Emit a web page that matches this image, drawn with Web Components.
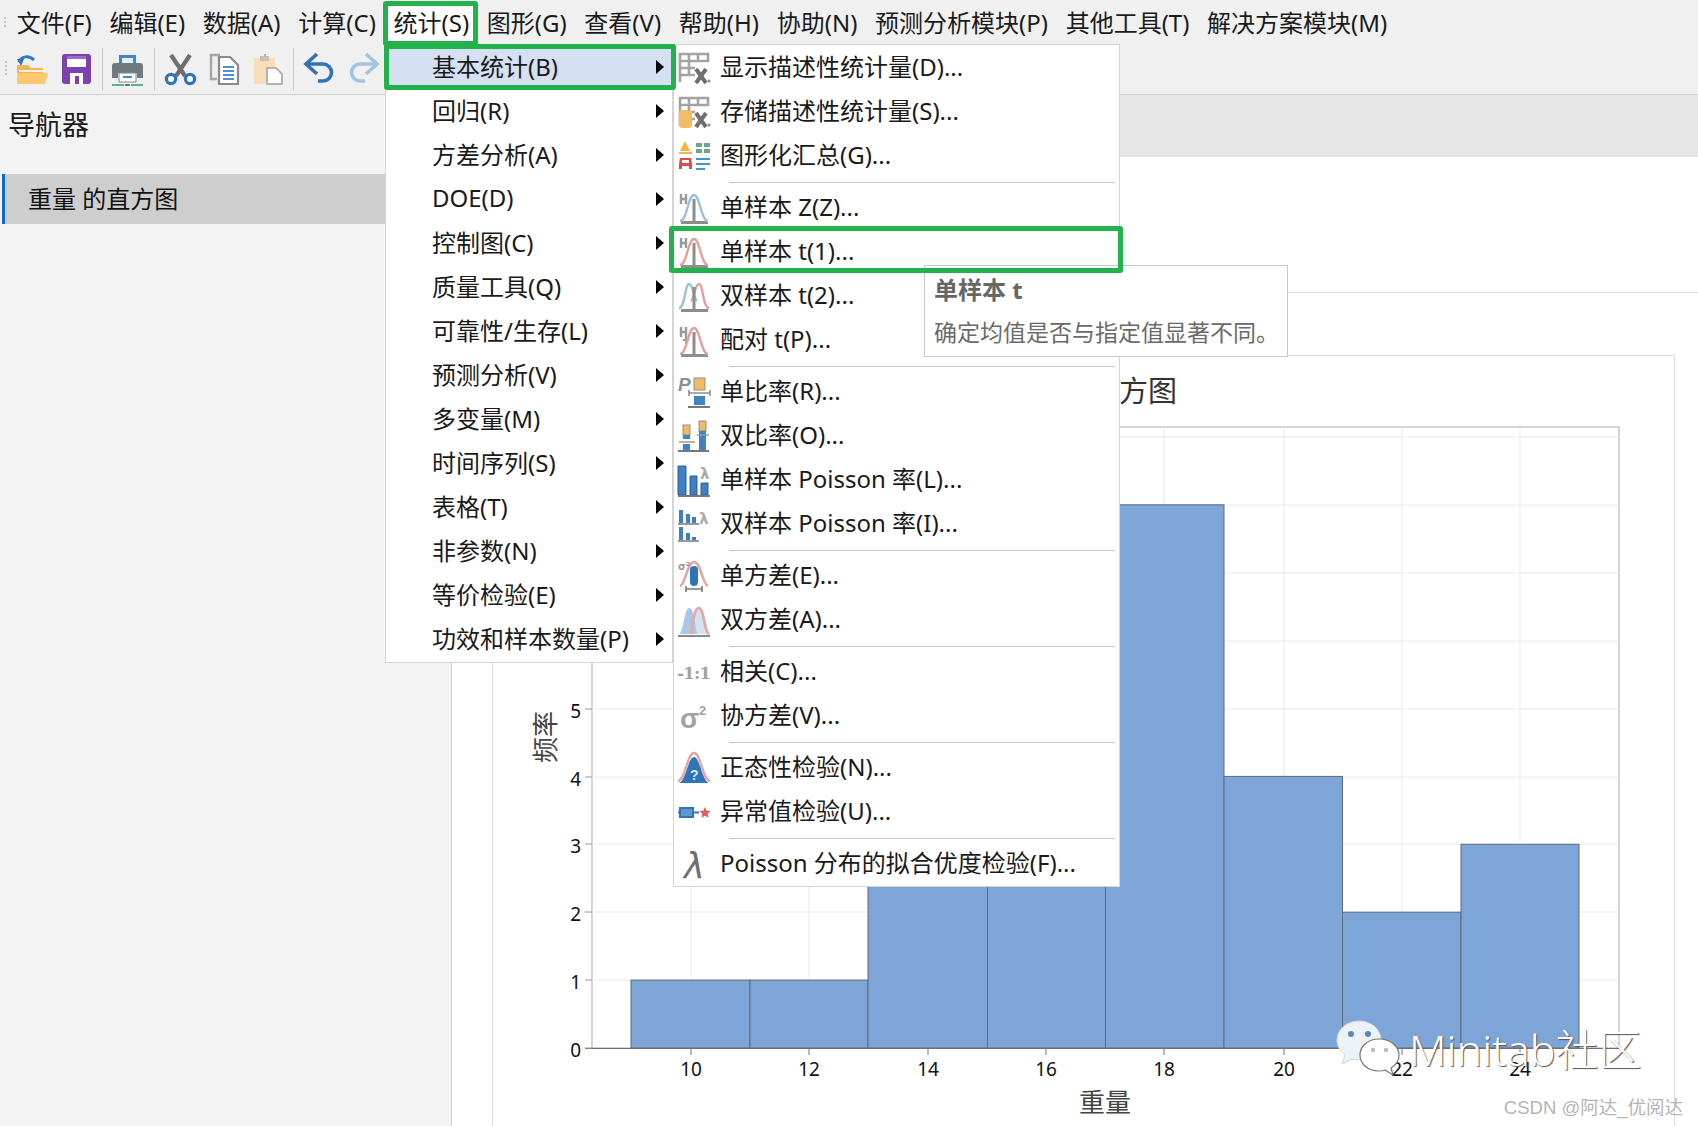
<!DOCTYPE html>
<html lang="zh">
<head>
<meta charset="utf-8">
<title>Minitab</title>
<style>
  html, body { margin: 0; height: 100%; }
  body {
    width: 1698px;
    height: 1126px;
    overflow: hidden;
    position: relative;
    background: #fff;
    color: #1a1a1a;
    font-family: "Noto Sans", "Noto Sans CJK SC", sans-serif;
    font-size: 24px;
  }
</style>
</head>
<body>
<x-shell>
  <x-menubar slot="menubar">
    <x-bar-item>文件(F)</x-bar-item>
    <x-bar-item>编辑(E)</x-bar-item>
    <x-bar-item>数据(A)</x-bar-item>
    <x-bar-item>计算(C)</x-bar-item>
    <x-bar-item open>统计(S)</x-bar-item>
    <x-bar-item>图形(G)</x-bar-item>
    <x-bar-item>查看(V)</x-bar-item>
    <x-bar-item>帮助(H)</x-bar-item>
    <x-bar-item>协助(N)</x-bar-item>
    <x-bar-item>预测分析模块(P)</x-bar-item>
    <x-bar-item>其他工具(T)</x-bar-item>
    <x-bar-item>解决方案模块(M)</x-bar-item>
  </x-menubar>
  <x-toolbar slot="toolbar">
    <x-icon name="open" style="margin-left:9px"></x-icon>
    <x-icon name="save" style="margin-left:13px"></x-icon>
    <x-tool-sep style="margin-left:9px"></x-tool-sep>
    <x-icon name="print" style="margin-left:8px"></x-icon>
    <x-tool-sep style="margin-left:11px"></x-tool-sep>
    <x-icon name="cut" style="margin-left:9px"></x-icon>
    <x-icon name="copy" style="margin-left:12px"></x-icon>
    <x-icon name="paste" style="margin-left:12px"></x-icon>
    <x-tool-sep style="margin-left:9px"></x-tool-sep>
    <x-icon name="undo" style="margin-left:10px"></x-icon>
    <x-icon name="redo" style="margin-left:11px"></x-icon>
  </x-toolbar>
  <x-navigator slot="nav">
    <span slot="title">导航器</span>
    <span slot="selected">重量 的直方图</span>
  </x-navigator>
  <x-workspace slot="main">
    <x-histogram></x-histogram>
  </x-workspace>
</x-shell>

<x-menu style="left:385px;top:44px;width:288px;height:619px">
  <x-menu-item arrow active>基本统计(B)</x-menu-item>
  <x-menu-item arrow>回归(R)</x-menu-item>
  <x-menu-item arrow>方差分析(A)</x-menu-item>
  <x-menu-item arrow>DOE(D)</x-menu-item>
  <x-menu-item arrow>控制图(C)</x-menu-item>
  <x-menu-item arrow>质量工具(Q)</x-menu-item>
  <x-menu-item arrow>可靠性/生存(L)</x-menu-item>
  <x-menu-item arrow>预测分析(V)</x-menu-item>
  <x-menu-item arrow>多变量(M)</x-menu-item>
  <x-menu-item arrow>时间序列(S)</x-menu-item>
  <x-menu-item arrow>表格(T)</x-menu-item>
  <x-menu-item arrow>非参数(N)</x-menu-item>
  <x-menu-item arrow>等价检验(E)</x-menu-item>
  <x-menu-item arrow>功效和样本数量(P)</x-menu-item>
</x-menu>

<x-menu style="left:673px;top:44px;width:447px;height:843px">
  <x-menu-item icon="display">显示描述性统计量(D)...</x-menu-item>
  <x-menu-item icon="store">存储描述性统计量(S)...</x-menu-item>
  <x-menu-item icon="summary">图形化汇总(G)...</x-menu-item>
  <x-menu-sep></x-menu-sep>
  <x-menu-item icon="z1">单样本 Z(Z)...</x-menu-item>
  <x-menu-item icon="t1">单样本 t(1)...</x-menu-item>
  <x-menu-item icon="t2">双样本 t(2)...</x-menu-item>
  <x-menu-item icon="tp">配对 t(P)...</x-menu-item>
  <x-menu-sep></x-menu-sep>
  <x-menu-item icon="p1">单比率(R)...</x-menu-item>
  <x-menu-item icon="p2">双比率(O)...</x-menu-item>
  <x-menu-item icon="pois1">单样本 Poisson 率(L)...</x-menu-item>
  <x-menu-item icon="pois2">双样本 Poisson 率(I)...</x-menu-item>
  <x-menu-sep></x-menu-sep>
  <x-menu-item icon="var1">单方差(E)...</x-menu-item>
  <x-menu-item icon="var2">双方差(A)...</x-menu-item>
  <x-menu-sep></x-menu-sep>
  <x-menu-item icon="corr">相关(C)...</x-menu-item>
  <x-menu-item icon="cov">协方差(V)...</x-menu-item>
  <x-menu-sep></x-menu-sep>
  <x-menu-item icon="normal">正态性检验(N)...</x-menu-item>
  <x-menu-item icon="outlier">异常值检验(U)...</x-menu-item>
  <x-menu-sep></x-menu-sep>
  <x-menu-item icon="lambda">Poisson 分布的拟合优度检验(F)...</x-menu-item>
</x-menu>

<x-tooltip style="left:924px;top:265px;width:364px;height:92px">
  <span slot="title">单样本 t</span>
  确定均值是否与指定值显著不同。
</x-tooltip>

<x-callout style="left:383px;top:1px;width:95px;height:45px"></x-callout>
<x-callout style="left:384px;top:44px;width:292px;height:46px"></x-callout>
<x-callout style="left:669px;top:226px;width:454px;height:47px"></x-callout>

<x-watermark style="left:1336px;top:1020px"></x-watermark>

<script>
const BELL = 'M2 29C9 29 10 3 16 3S23 29 30 29';
const GAUGE = '<path d="M16 7v23M3 30.500h27" stroke="#8d8d8d" stroke-width="3" fill="none"/>';
const MU = '<path d="M3 2v10M8 2v10M3 7h5" stroke="#9a9a9a" stroke-width="2.400" fill="none"/>';
const TABLE = '<path d="M2 2h28v7H2zM2 9v21M2 16h15M2 23h15M11 2v7M20 2v7M11 9v14" fill="none" stroke="#a3a3a3" stroke-width="2.600"/>';
const XBAR = '<path d="M18 17l10 14M28 17L18 31" stroke="#6f6f6f" stroke-width="4" fill="none"/><circle cx="31" cy="29" r="1.500" fill="#8a8a8a"/>';

const ICONS = {
  open: `<path d="M3 9C5 3 13 2 18 7" fill="none" stroke="#2f79bd" stroke-width="3"/><path d="M1 6l7 0-3 7z" fill="#2f79bd"/>
    <path d="M1 12h11l3 3h12v6H1z" fill="#f2b65a"/><path d="M1 31V20h31l-3 11z" fill="#fbc76f"/><path d="M3 19h24v-2H3z" fill="#fff3da"/>`,
  save: `<path d="M1 4a3 3 0 013-3h23a3 3 0 013 3v24a3 3 0 01-3 3H4a3 3 0 01-3-3z" fill="#7c43ad"/>
    <path d="M6 3h19v11H6z" fill="#fff"/><path d="M6 3h19v3H6z" fill="#9a6cc4"/><path d="M9 20h13v11H9z" fill="#fff"/><path d="M14 23h4v8h-4z" fill="#7c43ad"/>`,
  print: `<path d="M8 2h17v10H8z" fill="#3f86c6"/><path d="M11 5h11v7H11z" fill="#e6f0f9"/>
    <path d="M1 13a3 3 0 013-3h25a3 3 0 013 3v12h-6v-5H7v5H1z" fill="#6e7a7c"/>
    <path d="M8 20h17v9H8z" fill="#fff" stroke="#7d8a8c"/><path d="M12 23h9v2h-9z" fill="#3f86c6"/>
    <path d="M1 32h12M20 32h12" stroke="#5fb284" stroke-width="2"/><path d="M14 31h5v2h-5z" fill="#777"/>`,
  cut: `<path d="M7 2l14 21M26 2L12 23" stroke="#6f6f6f" stroke-width="4.200" fill="none"/>
    <circle cx="7" cy="26" r="4.600" fill="#fff" stroke="#2f74b8" stroke-width="3.200"/><circle cx="26" cy="26" r="4.600" fill="#fff" stroke="#2f74b8" stroke-width="3.200"/>`,
  copy: `<path d="M12 2H3v24h6" fill="none" stroke="#a5a5a5" stroke-width="2.400"/><path d="M11 4h11l8 8v19H11z" fill="#fff" stroke="#8a8a8a" stroke-width="2.200"/>
    <path d="M15 14h11M15 18h11M15 22h11M15 26h11" stroke="#4c8fd0" stroke-width="2"/>`,
  paste: `<path d="M2 5h21v26H2z" fill="#f6dfb6"/><path d="M8 3h9v5H8z" fill="#c9c2b4"/><path d="M12 1h2v3h-2z" fill="#b5b0a6"/>
    <path d="M15 15h9l6 6v10H15z" fill="#fff" stroke="#b3b3b3" stroke-width="2"/>`,
  undo: `<path d="M4 11h15a8.500 8.500 0 010 17h-5" fill="none" stroke="#2f74b8" stroke-width="3.600"/><path d="M13 1L2 11l11 10" fill="none" stroke="#2f74b8" stroke-width="3.600"/>`,
  redo: `<path d="M28 11H13a8.500 8.500 0 000 17h5" fill="none" stroke="#a3c3e2" stroke-width="3.600"/><path d="M19 1l11 10-11 10" fill="none" stroke="#a3c3e2" stroke-width="3.600"/>`,
  display: TABLE + XBAR,
  store: TABLE + '<rect x="1" y="14" width="13" height="18" rx="3" fill="#f3bd66"/>' + XBAR,
  summary: `<path d="M7 1l5 10H2z" fill="#f5b43e"/><path d="M1 12h13v2H1z" fill="#f5b43e"/><path d="M2 18h11l1 6v5h-3v-3H4v3H1v-5zM4 23h7v-3H4z" fill="#dd4b4b"/>
    <path d="M18 3h6v4h-6zM26 3h6v4h-6zM18 9h6v4h-6zM26 9h6v4h-6z" fill="#6aa88c"/><path d="M18 18h14v2H18zM18 23h14v2H18zM18 28h9v2h-9z" fill="#4c8fd0"/>`,
  z1: MU + GAUGE + `<path d="${BELL}" fill="none" stroke="#9dbfe2" stroke-width="2.400"/>`,
  t1: MU + GAUGE + `<path d="${BELL}" fill="none" stroke="#e3a19e" stroke-width="2.400"/>`,
  t2: `<path d="M1 28C7 28 7 4 11 4s5 15 8 17" fill="none" stroke="#9dbfe2" stroke-width="2.400"/><path d="M31 28C25 28 25 4 21 4s-5 15-8 17" fill="none" stroke="#e3a19e" stroke-width="2.400"/>` + GAUGE,
  tp: MU + `<path d="M5 15h6M8 11v8" stroke="#9a9a9a" stroke-width="2"/>` + GAUGE + `<path d="${BELL}" fill="none" stroke="#e3a19e" stroke-width="2.400"/>`,
  p1: `<text x="0" y="15" font-family="Liberation Sans" font-weight="700" font-style="italic" font-size="19" fill="#8f8f8f">P</text>
    <rect x="16" y="2" width="11" height="12" fill="#f1bb62" stroke="#8f8f8f"/><rect x="16" y="20" width="11" height="9" fill="#3f82c6"/>
    <path d="M11 17h21M11 14v6M32 14v6" stroke="#8f8f8f" stroke-width="1.600"/><path d="M10 31h22" stroke="#777" stroke-width="2"/>`,
  p2: `<rect x="5" y="5" width="7" height="10" fill="#f1bb62" stroke="#8f8f8f"/><rect x="5" y="15" width="7" height="4" fill="#3f82c6"/><rect x="5" y="24" width="7" height="6" fill="#3f82c6"/>
    <rect x="21" y="1" width="7" height="10" fill="#f1bb62" stroke="#8f8f8f"/><rect x="21" y="11" width="7" height="19" fill="#3f82c6"/>
    <path d="M1 22h16M19 15h12" stroke="#9a9a9a" stroke-width="1.600"/><path d="M0 31h31" stroke="#777" stroke-width="2"/>`,
  pois1: `<path d="M0 1h8v29H0zM12 11h7v19h-7zM23 18h7v12h-7z" fill="#3f7fc4" stroke="#2a5f9e"/><path d="M0 31h32" stroke="#777" stroke-width="2"/>
    <text x="22" y="14" font-family="DejaVu Sans" font-size="15" font-weight="700" fill="#aaa">λ</text>`,
  pois2: `<path d="M1 1h4v13H1zM8 5h4v9H8zM14 8h4v6h-4zM1 18h4v13H1zM8 24h4v7H8zM14 28h4v3h-4z" fill="#3f7fc4"/><path d="M0 15h21M0 32h21" stroke="#777" stroke-width="1.600"/>
    <text x="21" y="15" font-family="DejaVu Sans" font-size="15" font-weight="700" fill="#aaa">λ</text>`,
  var1: `<path d="M2 26C8 24 9 2 16 2s8 22 14 24" fill="none" stroke="#e7a6a2" stroke-width="2.600"/><rect x="12" y="6" width="8" height="20" rx="4" fill="#2f74b8"/>
    <path d="M8 29h16M8 26v6M24 26v6" stroke="#777" stroke-width="1.600"/>
    <text x="0" y="10" font-family="DejaVu Sans" font-weight="700" font-size="10" fill="#999">σ²</text>`,
  var2: `<path d="M1 29C6 27 6 3 11 3s6 14 8 26z" fill="#a9c7e6"/><path d="M14 29C15 18 15 3 21 3s6 14 10 26z" fill="#a9c7e6" opacity=".5"/><path d="M31 29C26 27 26 3 21 3s-6 14-8 26" fill="none" stroke="#e7a6a2" stroke-width="2.600"/><path d="M0 31h32" stroke="#888" stroke-width="2"/>`,
  corr: `<text x="-1" y="23" font-family="DejaVu Serif" font-weight="700" font-size="17" fill="#a2a2a2" textLength="34">-1:1</text>`,
  cov: `<text x="2" y="28" font-family="Liberation Sans" font-weight="700" font-size="28" fill="#a2a2a2">σ</text><text x="21" y="15" font-family="Liberation Sans" font-weight="700" font-size="13" fill="#a2a2a2">2</text>`,
  normal: `<path d="M0 29C8 27 9 1 16 1s8 26 16 28" fill="none" stroke="#e7a6a2" stroke-width="2.400"/><path d="M1 31C8 29 10 5 16 5s8 24 15 26z" fill="#2f74b8"/>
    <text x="12" y="28" font-family="Liberation Sans" font-weight="700" font-size="14" fill="#dce9f6">?</text>`,
  outlier: `<rect x="2" y="12" width="13" height="9" fill="#5f97d3" stroke="#2f74b8" stroke-width="2"/><path d="M0 16.500h2M15 16.500h6" stroke="#2f74b8" stroke-width="2"/>
    <path d="M27 11l1.700 3.700 4 .4-3 2.700.9 4-3.600-2.100-3.600 2.100.9-4-3-2.700 4-.4z" fill="#e25f5f"/>`,
  lambda: `<text x="6" y="30" font-family="DejaVu Sans" font-size="35" font-style="italic" fill="#6f6f6f">λ</text>`
};

class ShadowElement extends HTMLElement {
  constructor() {
    super();
    this.attachShadow({mode: 'open'});
  }

  connectedCallback() {
    this.render();
  }
}

class Shell extends ShadowElement {
  render() {
    this.shadowRoot.innerHTML = `
      <style>
        :host { display: flex; flex-direction: column; height: 1126px; background: #f0f0f0; }
        .body { flex: 1; display: flex; min-height: 0; border-top: 1px solid #d2d2d2; }
      </style>
      <slot name="menubar"></slot>
      <slot name="toolbar"></slot>
      <div class="body">
        <slot name="nav"></slot>
        <slot name="main"></slot>
      </div>
    `;
  }
}

class Menubar extends ShadowElement {
  render() {
    this.shadowRoot.innerHTML = `
      <style>
        :host { display: flex; align-items: center; height: 44px; padding-left: 8px; position: relative; }
        :host::before {
          content: ''; position: absolute; left: 4px; top: 17px; width: 2px; height: 10px;
          background: repeating-linear-gradient(#c4c4c4 0 2px, transparent 2px 4px);
        }
      </style>
      <slot></slot>
    `;
  }
}

class BarItem extends ShadowElement {
  render() {
    this.shadowRoot.innerHTML = `
      <style>
        :host { display: block; height: 44px; line-height: 46px; padding: 0 8.850px; white-space: nowrap; }
        :host([open]) { background: #fff; }
      </style>
      <slot></slot>
    `;
  }
}

class Toolbar extends ShadowElement {
  render() {
    this.shadowRoot.innerHTML = `
      <style>
        :host { display: flex; align-items: center; height: 50px; padding-left: 5px; }
        .grip { width: 2px; height: 16px; background: repeating-linear-gradient(#c4c4c4 0 2px, transparent 2px 4px); }
      </style>
      <div class="grip"></div>
      <slot></slot>
    `;
  }
}

class ToolSep extends ShadowElement {
  render() {
    this.shadowRoot.innerHTML = `
      <style>:host { display: block; width: 1px; height: 42px; background: #c8c8c8; }</style>
    `;
  }
}

class Icon extends ShadowElement {
  render() {
    const body = ICONS[this.getAttribute('name')] || '';
    this.shadowRoot.innerHTML = `
      <style>
        :host { display: block; width: 32px; height: 32px; flex: none; }
        svg { display: block; overflow: visible; }
      </style>
      <svg width="32" height="32" viewBox="0 0 32 32">${body}</svg>
    `;
  }
}

class Navigator extends ShadowElement {
  render() {
    this.shadowRoot.innerHTML = `
      <style>
        :host { display: block; width: 451px; flex: none; background: #f3f3f3; border-right: 1px solid #d2d2d2; }
        .title { font-size: 27px; line-height: 40px; padding: 10px 8px 0; height: 69px; box-sizing: border-box; margin-bottom: 10px; }
        .selected {
          margin-left: 2px; height: 50px; line-height: 50px; padding-left: 23px;
          background: #cecece; border-left: 3px solid #0e6cb8; color: #111;
        }
      </style>
      <div class="title"><slot name="title"></slot></div>
      <div class="selected"><slot name="selected"></slot></div>
    `;
  }
}

class Workspace extends ShadowElement {
  render() {
    this.shadowRoot.innerHTML = `
      <style>
        :host { flex: 1; min-width: 0; display: flex; flex-direction: column; background: #fff; }
        .header { height: 62px; background: #e5e5e5; flex: none; }
        .blank { height: 135px; border-bottom: 1px solid #dedede; flex: none; }
        .content { flex: 1; min-height: 0; padding: 62px 23px 0 40px; }
      </style>
      <div class="header"></div>
      <div class="blank"></div>
      <div class="content"><slot></slot></div>
    `;
  }
}

class Histogram extends ShadowElement {
  render() {
    const yTicks = [1048, 980, 912, 844, 777, 709, 641, 573, 505, 437];
    const xTicks = [[691, 10], [809, 12], [928, 14], [1046, 16], [1164, 18], [1284, 20], [1402, 22], [1520, 24]];
    const edges = [631, 750, 868, 987.500, 1105.500, 1224, 1342.500, 1461, 1579];
    const heights = [1, 1, 5, 5, 8, 4, 2, 3];

    const grid = [
      ...yTicks.slice(1).map(y => `<path d="M592 ${y}H1619" stroke="#e9e9e9"/>`),
      ...xTicks.map(([x]) => `<path d="M${x} 427V1048" stroke="#e9e9e9"/>`)
    ].join('');

    const bars = heights.map((h, i) => {
      const top = 1048 - h * 67.9;
      return `<rect x="${edges[i]}" y="${top}" width="${edges[i + 1] - edges[i]}" height="${1048 - top}" fill="#7da5d8" stroke="#5c6b80"/>`;
    }).join('');

    const yLabels = yTicks.slice(0, 6).map((y, i) =>
      `<path d="M585 ${y}H592" stroke="#999"/><text x="581" y="${y + 9}" text-anchor="end">${i}</text>`
    ).join('');

    const xLabels = xTicks.map(([x, v]) =>
      `<path d="M${x} 1048V1055" stroke="#777"/><text x="${x}" y="1076" text-anchor="middle">${v}</text>`
    ).join('');

    this.shadowRoot.innerHTML = `
      <style>
        :host { display: block; height: 100%; border: 1px solid #dcdcdc; border-bottom: 0; box-sizing: border-box; }
        svg { display: block; font-family: "Noto Sans", "Noto Sans CJK SC", sans-serif; }
        text { font-size: 19px; fill: #111; }
        .title { font-size: 29px; fill: #333; }
        .axis { font-size: 26px; fill: #444; }
      </style>
      <svg width="1181" height="770" viewBox="493 356 1181 770">
        <text class="title" x="1177" y="402" text-anchor="end">重量 的直方图</text>
        <rect x="592" y="427" width="1027" height="621" fill="#fff" stroke="#ababab"/>
        ${grid}
        ${bars}
        <path d="M585 1048.500H1619" stroke="#707070"/>
        ${yLabels}
        ${xLabels}
        <text class="axis" x="1105" y="1112" text-anchor="middle">重量</text>
        <text class="axis" transform="translate(555 737) rotate(-90)" text-anchor="middle">频率</text>
      </svg>
    `;
  }
}

class Menu extends ShadowElement {
  render() {
    this.shadowRoot.innerHTML = `
      <style>
        :host {
          position: absolute; box-sizing: border-box; display: flex; flex-direction: column;
          padding-top: 1px; background: #fff; border: 1px solid #d4d4d4;
        }
      </style>
      <slot></slot>
    `;
  }
}

class MenuItem extends ShadowElement {
  render() {
    const icon = this.getAttribute('icon');
    const arrow = this.hasAttribute('arrow');
    this.shadowRoot.innerHTML = `
      <style>
        :host { display: flex; align-items: center; flex: 1 1 44px; min-height: 0; white-space: nowrap; position: relative; color: #1a1a1a; }
        :host([active]) { background: #d5e1f2; }
        :host([arrow]) .label { padding-left: 46px; }
        .label { margin-bottom: 6px; }
        .icon { margin: 0 10px 0 4px; }
        .arrow {
          position: absolute; right: 8px; top: 50%; margin-top: -8px;
          border-left: 8px solid #000; border-top: 7px solid transparent; border-bottom: 7px solid transparent;
        }
      </style>
      ${icon ? `<x-icon class="icon" name="${icon}"></x-icon>` : ''}
      <span class="label"><slot></slot></span>
      ${arrow ? '<span class="arrow"></span>' : ''}
    `;
  }
}

class MenuSep extends ShadowElement {
  render() {
    this.shadowRoot.innerHTML = `
      <style>
        :host { display: flex; align-items: center; height: 7.500px; flex: none; padding: 0 4px 0 55px; }
        div { flex: 1; height: 1px; background: #c8c8c8; }
      </style>
      <div></div>
    `;
  }
}

class Tooltip extends ShadowElement {
  render() {
    this.shadowRoot.innerHTML = `
      <style>
        :host {
          position: absolute; box-sizing: border-box; display: block; padding: 5px 10px 0 9px;
          background: #fff; border: 1px solid #c8c8c8; color: #6a6a6a; white-space: nowrap;
        }
        .title { font-weight: 700; line-height: 38px; margin-bottom: 4px; color: #666; }
        .text { line-height: 38px; font-size: 23px; }
      </style>
      <div class="title"><slot name="title"></slot></div>
      <div class="text"><slot></slot></div>
    `;
  }
}

class Callout extends ShadowElement {
  render() {
    this.shadowRoot.innerHTML = `
      <style>
        :host {
          position: absolute; box-sizing: border-box; display: block;
          border: 5px solid #21b24c; border-radius: 3px; pointer-events: none;
        }
      </style>
    `;
  }
}

class Watermark extends ShadowElement {
  render() {
    this.shadowRoot.innerHTML = `
      <style>
        :host { position: absolute; display: block; width: 362px; height: 106px; }
        svg { position: absolute; left: 0; top: 0; }
        .name {
          position: absolute; left: 73px; top: 2px; font-size: 43px; line-height: 56px; font-weight: 300;
          color: #fff; white-space: nowrap; text-shadow: 1px 1px 1px #555;
        }
        .credit {
          position: absolute; right: 15px; bottom: 5px; font: 18.500px/26px "Liberation Sans", "Noto Sans CJK SC", sans-serif;
          color: #b5b5b5; white-space: nowrap;
        }
      </style>
      <svg width="66" height="58" viewBox="0 0 66 58">
        <path d="M23 1C11 1 1 9 1 20c0 6 3 11 8 15l-3 9 10-5c2 .5 5 1 7 1 12 0 22-9 22-20S35 1 23 1z" fill="#edf2f9" stroke="#d0d6dd"/>
        <circle cx="15" cy="14" r="3" fill="#5c88b5"/><circle cx="32" cy="14" r="3" fill="#5c88b5"/>
        <path d="M43 19c-12 0-19 8-19 16s7 16 19 16c2 0 4 0 6-1l8 5-2-7c5-3 8-8 8-13 0-8-8-16-20-16z" fill="#fff" stroke="#777" stroke-width="1.200"/>
        <circle cx="37" cy="30" r="2.200" fill="#bbb"/><circle cx="50" cy="30" r="2.200" fill="#bbb"/>
      </svg>
      <div class="name">Minitab社区</div>
      <div class="credit">CSDN @阿达_优阅达</div>
    `;
  }
}

customElements.define('x-shell', Shell);
customElements.define('x-menubar', Menubar);
customElements.define('x-bar-item', BarItem);
customElements.define('x-toolbar', Toolbar);
customElements.define('x-tool-sep', ToolSep);
customElements.define('x-icon', Icon);
customElements.define('x-navigator', Navigator);
customElements.define('x-workspace', Workspace);
customElements.define('x-histogram', Histogram);
customElements.define('x-menu', Menu);
customElements.define('x-menu-item', MenuItem);
customElements.define('x-menu-sep', MenuSep);
customElements.define('x-tooltip', Tooltip);
customElements.define('x-callout', Callout);
customElements.define('x-watermark', Watermark);
</script>
</body>
</html>
